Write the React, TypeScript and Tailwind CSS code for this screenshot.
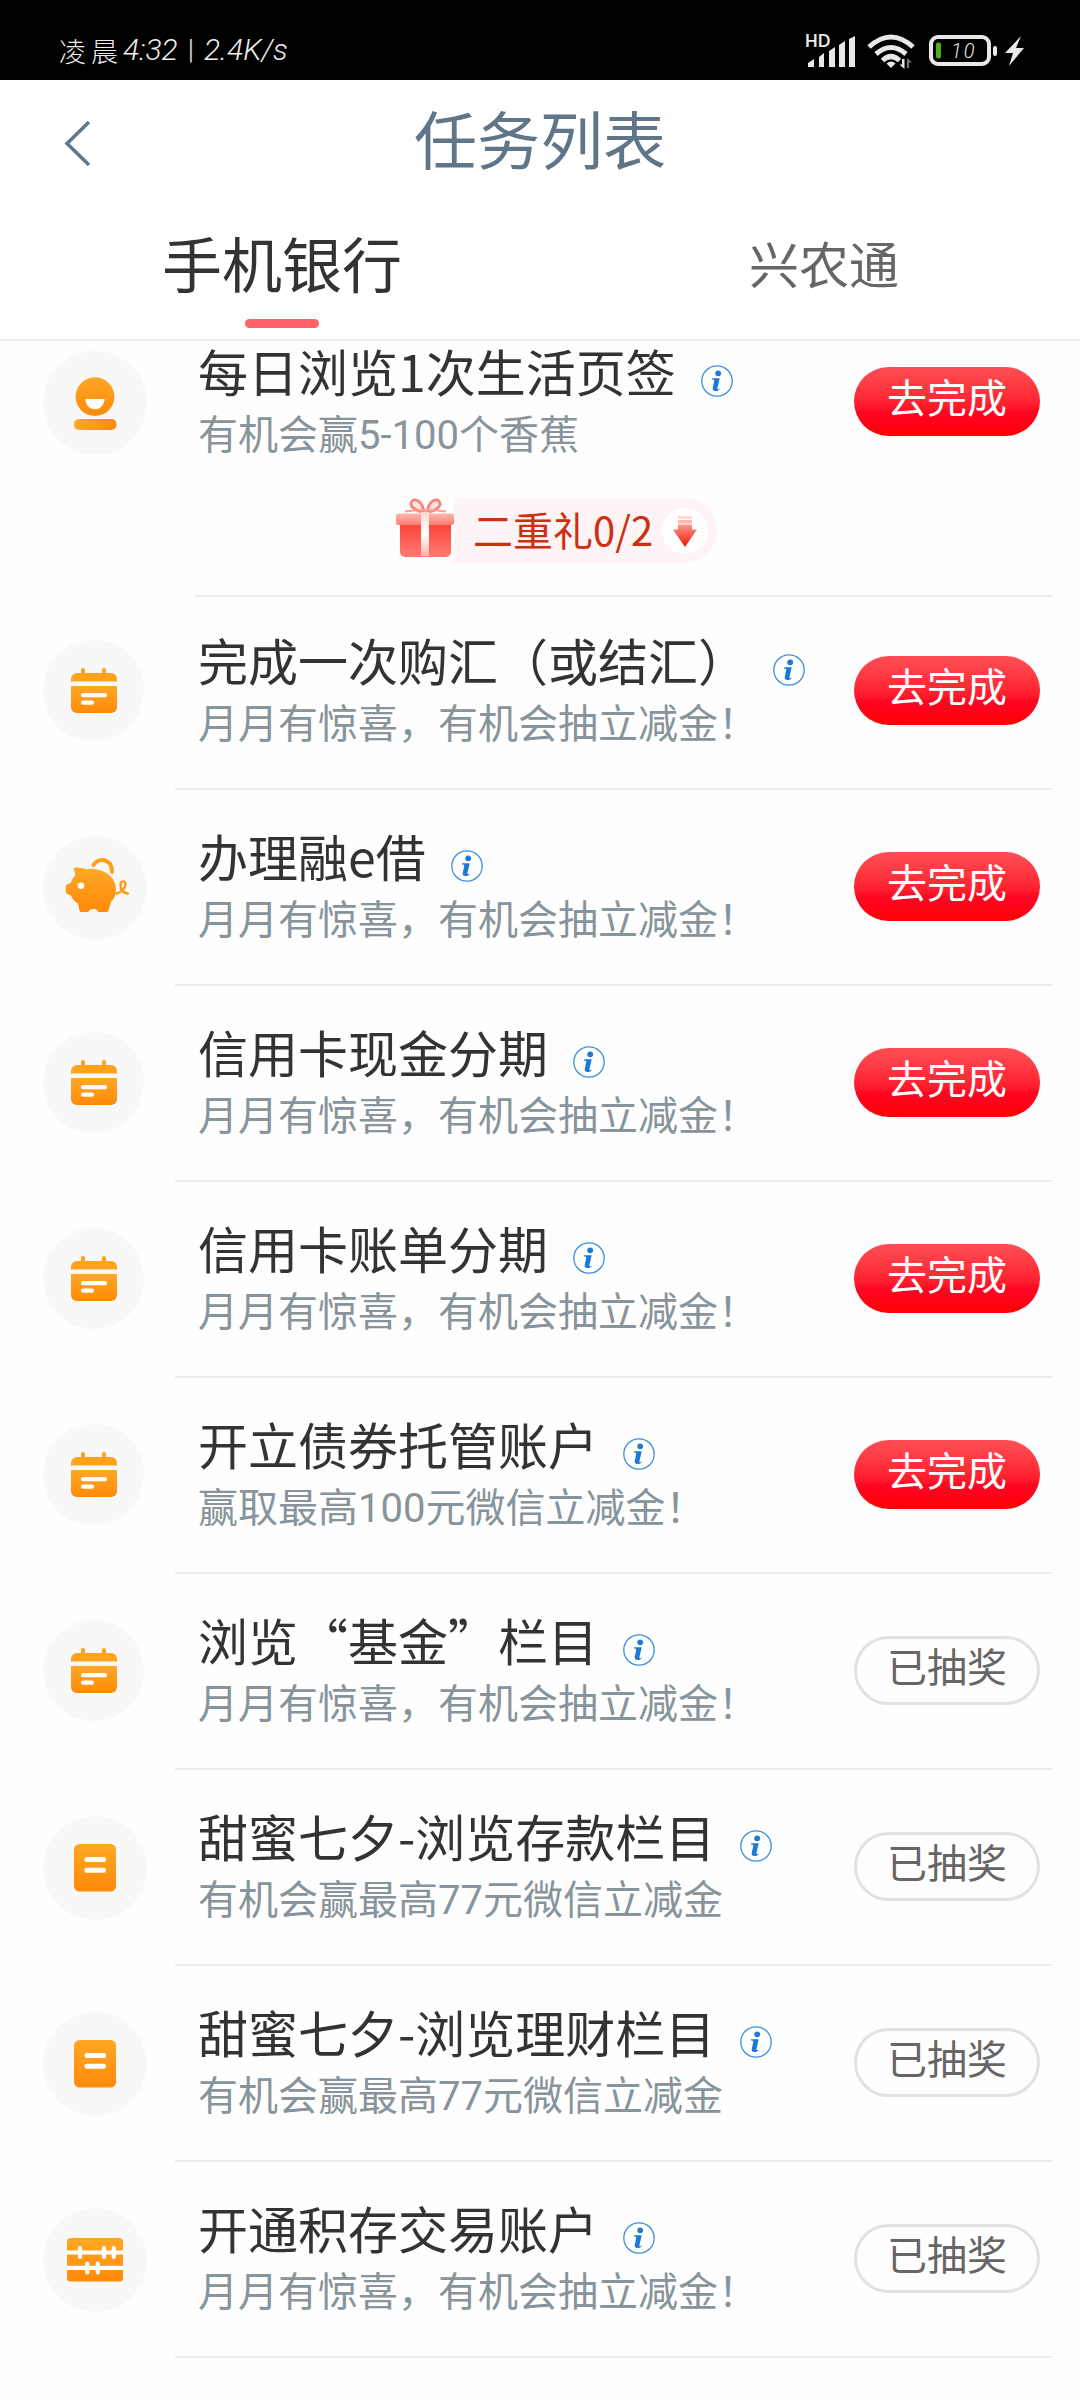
import type { ReactNode } from "react";

function Face() {
  return (
    <svg width="104" height="104" viewBox="0 0 104 104">
      <circle cx="52" cy="45.7" r="19.4" fill="url(#orange)" />
      <path d="M42.4 48h19c0 6-4 10.200-9.500 10.200S42.400 54 42.400 48z" fill="#fff" />
      <rect x="31" y="68" width="42.500" height="11" rx="5" fill="url(#orangeFlat)" />
    </svg>
  );
}

function Calendar() {
  return (
    <svg width="101" height="101" viewBox="0 0 101 101">
      <path d="M38 33v-3a2 2 0 0 1 4 0v3h17v-3a2 2 0 0 1 4 0v3h5a6 6 0 0 1 6 6v2.500H28V39a6 6 0 0 1 6-6z" fill="#ffa31c" />
      <path d="M28 46h46v21a6 6 0 0 1-6 6H34a6 6 0 0 1-6-6z" fill="url(#orange)" />
      <rect x="38" y="53" width="26" height="4.200" rx="2" fill="#fff" />
      <rect x="38" y="60.500" width="13" height="4.200" rx="2" fill="#fff" />
    </svg>
  );
}

function Piggy() {
  return (
    <svg width="104" height="104" viewBox="0 0 104 104">
      <path
        d="M31 33.500c-1-1 0-2 1.500-2 4 0 8 .5 11 2C55 31.500 73 37 73 54c0 6-2.500 9-5 12l-2.500 8.500a2 2 0 0 1-2 1.500h-7c-1.500 0-2-.5-2.500-2-1-1.500-6.500-1.500-7.500 0-.5 1.500-1 2-2.500 2h-5.500a2 2 0 0 1-2-1.500l-1.500-7c-4-2-5.500-4.500-7-8l-3.700-1.500c-1-.5-1.500-1-1.500-2.500v-5c0-1.200.5-1.800 1.500-2.300l3.500-1.500c1-3 2.500-5.500 4.500-7.500z"
        fill="url(#orange)"
      />
      <circle cx="38" cy="49.700" r="3.300" fill="#fff" />
      <path d="M50.500 29C55 21 69 22 69 36" fill="none" stroke="#ffa01c" strokeWidth="4" strokeLinecap="round" />
      <path
        d="M73.500 57.500C79 56 83 51 82.500 47.500 82 44.500 77.500 44.500 77.500 48.500 77.500 53 79 57 85 57.500"
        fill="none"
        stroke="#ff9a18"
        strokeWidth="2.400"
        strokeLinecap="round"
      />
    </svg>
  );
}

function Note() {
  return (
    <svg width="104" height="104" viewBox="0 0 104 104">
      <rect x="31" y="28" width="42" height="47.500" rx="5.500" fill="url(#orange)" />
      <rect x="41.500" y="41" width="21.500" height="5" rx="2" fill="#fff" />
      <rect x="41.500" y="51.800" width="21.500" height="5" rx="2" fill="#fff" />
    </svg>
  );
}

function Abacus() {
  return (
    <svg width="104" height="104" viewBox="0 0 104 104">
      <rect x="24" y="30" width="56" height="43.500" rx="3.500" fill="url(#orange)" />
      <g stroke="#fff" strokeWidth="4.200">
        <path d="M24 44.500h56M24 59.800h56" />
        <path d="M37 40v9M61 40v9M70.800 40v9M44.300 55.500v9M54.800 55.500v9" strokeLinecap="round" />
      </g>
    </svg>
  );
}

function Info() {
  return (
    <svg width="32" height="32" viewBox="0 0 32 32">
      <circle cx="16" cy="16" r="15.200" fill="#fff" stroke="#3b8fdc" strokeWidth="1.300" />
      <circle cx="17.200" cy="8.300" r="2.900" fill="#1b7ad6" />
      <path d="M11 13.300h7.700l-2.300 9.900c-.2 1.200 1 1.300 2.800.2-1.500 3-8.200 4.200-7.500-.3l1.500-6.900c.2-1.200-.7-1.600-2.200-1.600z" fill="#1b7ad6" />
    </svg>
  );
}

function Gift() {
  return (
    <svg width="58" height="62" viewBox="0 0 58 62">
      <g fill="#fde4e0" stroke="#f9857a" strokeWidth="2.800">
        <path d="M28 15C20 14 13 10 15.500 5c2-4.500 10.500-2 12.500 10z" />
        <path d="M31 15c8-1 15-5 12.500-10-2-4.500-10.500-2-12.500 10z" />
      </g>
      <path d="M9 14.500q20-3 41 0" fill="none" stroke="#fa9e93" strokeWidth="2" />
      <path d="M4 26h51v29a5 5 0 0 1-5 5H9a5 5 0 0 1-5-5z" fill="url(#giftBody)" />
      <rect x="0" y="16.500" width="58" height="11.500" rx="2" fill="url(#giftLid)" />
      <rect x="25" y="15" width="8" height="44" fill="url(#giftRibbon)" />
    </svg>
  );
}

function DownArrow() {
  return (
    <svg className="ml-[9px]" width="46" height="46" viewBox="0 0 46 46">
      <circle cx="23" cy="23" r="23" fill="#fff" />
      <rect x="16" y="8" width="14" height="3" fill="#fdd9d4" />
      <rect x="16" y="12" width="14" height="3.500" fill="#fbb9b2" />
      <path d="M16 16.500h14v5h5L23 39 11 21.500h5z" fill="url(#arrow)" />
    </svg>
  );
}

type Task = {
  icon: ReactNode;
  title: string;
  sub: string;
  done?: boolean;
};

const MONTHLY = "月月有惊喜，有机会抽立减金！";

const tasks: Task[] = [
  { icon: <Calendar />, title: "完成一次购汇（或结汇）", sub: MONTHLY },
  { icon: <Piggy />, title: "办理融e借", sub: MONTHLY },
  { icon: <Calendar />, title: "信用卡现金分期", sub: MONTHLY },
  { icon: <Calendar />, title: "信用卡账单分期", sub: MONTHLY },
  { icon: <Calendar />, title: "开立债券托管账户", sub: "赢取最高100元微信立减金！" },
  { icon: <Calendar />, title: "浏览“基金”栏目", sub: MONTHLY, done: true },
  { icon: <Note />, title: "甜蜜七夕-浏览存款栏目", sub: "有机会赢最高77元微信立减金", done: true },
  { icon: <Note />, title: "甜蜜七夕-浏览理财栏目", sub: "有机会赢最高77元微信立减金", done: true },
  { icon: <Abacus />, title: "开通积存交易账户", sub: MONTHLY, done: true },
];

function TaskBody({ icon, title, sub, done }: Task) {
  return (
    <div className="flex h-[194px] pl-[43px] pr-10">
      <div className="w-[155px] shrink-0">
        <div className="mt-[46px] w-fit rounded-full bg-[#f8f8f8]">{icon}</div>
      </div>
      <div className="w-[656px] shrink-0 whitespace-nowrap">
        <div className="mt-[35px] flex h-[60px] items-center gap-[25px] text-[50px] leading-[60px] text-[#333]">
          <span>{title}</span>
          <span className="mt-[22px]">
            <Info />
          </span>
        </div>
        <p className="mt-[13px] font-[Roboto,'Noto_Sans_CJK_SC',sans-serif] text-[40px] leading-[46px] text-[#87949b]">
          {sub}
        </p>
      </div>
      {done ? (
        <button className="mt-[62px] h-[69px] w-[186px] rounded-full border-[3px] border-[#e2e2e2] pb-[11px] text-[40px] leading-none text-[#666]">
          已抽奖
        </button>
      ) : (
        <button className="mt-[62px] h-[69px] w-[186px] rounded-full bg-linear-to-b from-[#ff4d55] via-[#ff0522] via-65% to-[#ff0000] pb-[11px] text-[40px] leading-none text-white">
          去完成
        </button>
      )}
    </div>
  );
}

function StatusBar() {
  return (
    <div className="flex h-20 items-center bg-black pl-[59px] pr-[53px] text-[#ececec]">
      <div className="mt-5 flex items-center whitespace-nowrap text-[27px] font-light leading-none">
        <span className="tracking-[5px]">凌晨</span>
        <span className="font-[Roboto,sans-serif] text-[30px] italic">4:32</span>
        <span className="ml-2.5 font-[Roboto,sans-serif] text-[28px]">|</span>
        <span className="ml-2.5 font-[Roboto,sans-serif] text-[30px] italic">2.4K/s</span>
      </div>
      <svg className="ml-auto mt-5" width="222" height="40" viewBox="0 0 222 40" fill="#e8e8e8">
        <text x="0" y="17" fontSize="16.500" fontWeight="700" fontFamily="Lato, sans-serif">HD</text>
        <path d="M3 37v-4l6-4v8zM14 37V27l5-4v14zM24 37V21l6-4v20zM34 37V15l6-4v26zM44 37V9l6-3v31z" />
        <g fill="none" stroke="#e8e8e8" strokeWidth="5">
          <path d="M64 17q22-20 44 0" />
          <path d="M71 24q15-13 30 0" />
          <path d="M77.500 30.500q8.500-8 17 0" />
        </g>
        <path d="M86 38l-4.500-4.500q4.500-4 9 0z" />
        <path d="M97 29h2.500v10l-5-4.500H97z" />
        <path d="M104 38h-2V28l5 4.500h-3z" fill="#777" />
        <rect x="126" y="7" width="58" height="27" rx="7" fill="none" stroke="#e8e8e8" strokeWidth="4" />
        <rect x="131" y="12.500" width="5" height="16" rx="2" fill="#4caf1a" />
        <text x="146" y="28" fontSize="20" fontStyle="italic" fontWeight="300" fontFamily="Roboto, sans-serif" letterSpacing="2">10</text>
        <rect x="188" y="16" width="4" height="10" rx="2" />
        <path d="M216 6l-16 17h8l-4 13 15-18h-8z" />
      </svg>
    </div>
  );
}

export default function App() {
  return (
    <div lang="zh-CN" className="h-[2400px] w-[1080px] overflow-hidden bg-[#fefefe] font-['Noto_Sans_CJK_SC',sans-serif]">
      <svg className="absolute" width="0" height="0">
        <defs>
          <linearGradient id="orange" x1="0" y1="0" x2="0" y2="1">
            <stop offset="0" stopColor="#ffa826" />
            <stop offset="1" stopColor="#ff8a08" />
          </linearGradient>
          <linearGradient id="orangeFlat" x1="0" y1="0" x2="1" y2="0">
            <stop offset="0" stopColor="#ffa826" />
            <stop offset="1" stopColor="#ff8a08" />
          </linearGradient>
          <linearGradient id="giftBody" x1="0" y1="0" x2="0" y2="1">
            <stop offset="0" stopColor="#fb4238" />
            <stop offset="1" stopColor="#ff7b70" />
          </linearGradient>
          <linearGradient id="giftLid" x1="0" y1="0" x2="0" y2="1">
            <stop offset="0" stopColor="#fdb5ab" />
            <stop offset="1" stopColor="#fb8075" />
          </linearGradient>
          <linearGradient id="giftRibbon" x1="0" y1="0" x2="0" y2="1">
            <stop offset="0" stopColor="#fdd8d2" />
            <stop offset="0.5" stopColor="#fff" />
            <stop offset="1" stopColor="#fdb5ab" />
          </linearGradient>
          <linearGradient id="arrow" x1="0" y1="0" x2="0" y2="1">
            <stop offset="0" stopColor="#fb9a90" />
            <stop offset="1" stopColor="#ee1200" />
          </linearGradient>
        </defs>
      </svg>

      <StatusBar />

      {/* Header */}
      <header className="grid h-[122px] grid-cols-3 items-center bg-white">
        <svg className="ml-16 mt-1" width="28" height="48" viewBox="0 0 28 48" fill="none" stroke="#5f7787" strokeWidth="3.500">
          <path d="M25 3L3 24.500 25 46" />
        </svg>
        <h1 className="-mt-2.5 text-center text-[63px] leading-none text-[#607688]">任务列表</h1>
      </header>

      {/* Tabs */}
      <nav className="flex h-[139px] border-b-2 border-[#ebebeb] bg-white">
        <div className="flex w-[564px] flex-col items-center">
          <span className="mt-7 text-[60px] leading-[64px] text-[#333]">手机银行</span>
          <span className="mt-[25px] h-[9px] w-[74px] rounded-full bg-[#ff6268]" />
        </div>
        <span className="ml-[185px] mt-7 text-[50px] leading-[64px] text-[#666]">兴农通</span>
      </nav>

      {/* Task list */}
      <section className="flow-root">
        <div className="-mt-9">
          <TaskBody icon={<Face />} title="每日浏览1次生活页签" sub="有机会赢5-100个香蕉" />
          <div className="-mt-0.5 ml-[195px] mr-7 flex h-[100px] border-b-2 border-[#ebebeb] pl-[201px]">
            <Gift />
            <div className="mt-px flex h-[65px] items-center rounded-r-full bg-[#fff4f5] pl-[19px] pr-[9px] text-[40px] leading-none text-[#cc3010]">
              <span className="-mt-1">二重礼0/2</span>
              <DownArrow />
            </div>
          </div>
        </div>
        <div className="-mt-[3px]">
          {tasks.map((task) => (
            <div key={task.title}>
              <TaskBody {...task} />
              <div className="ml-[175px] mr-7 h-0.5 bg-[#ececec]" />
            </div>
          ))}
        </div>
      </section>
    </div>
  );
}
